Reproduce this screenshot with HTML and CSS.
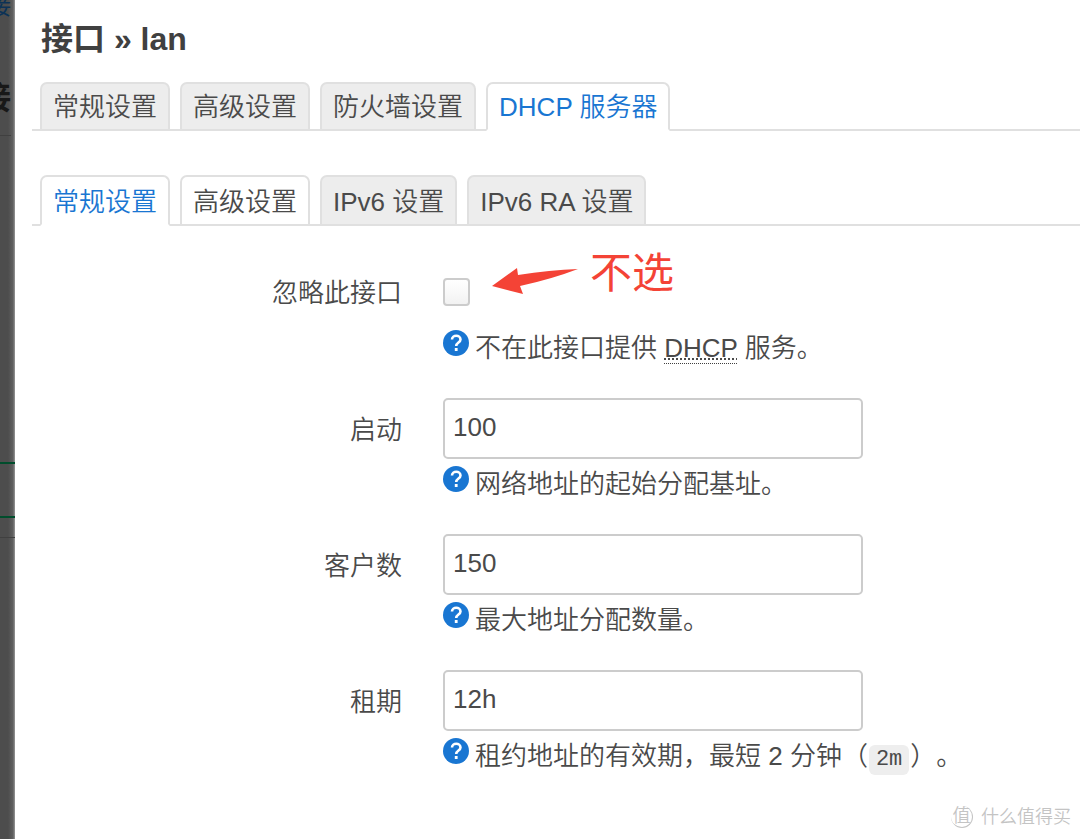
FILE: index.html
```
<!DOCTYPE html>
<html lang="zh-CN">
<head>
  <meta charset="UTF-8">
  <meta name="viewport" content="width=device-width, initial-scale=1.0">
  <title>接口 » lan</title>
  <link rel="stylesheet" href="styles.css">
</head>
<body>

  <!-- Page behind the dialog -->
  <div class="backdrop" aria-hidden="true">
    <div class="back-link">接</div>
    <div class="back-title">接</div>
    <div class="back-panel"></div>
    <div class="back-interface"></div>
    <div class="back-footer"></div>
  </div>

  <!-- Dialog -->
  <main class="modal">
    <h1>接口 » lan</h1>

    <ul class="tabs">
      <li><a href="#general">常规设置</a></li>
      <li><a href="#advanced">高级设置</a></li>
      <li><a href="#firewall">防火墙设置</a></li>
      <li class="active"><a href="#dhcp">DHCP 服务器</a></li>
    </ul>

    <ul class="tabs sub-tabs">
      <li class="active"><a href="#dhcp-general">常规设置</a></li>
      <li class="visited"><a href="#dhcp-advanced">高级设置</a></li>
      <li><a href="#dhcp-ipv6">IPv6 设置</a></li>
      <li><a href="#dhcp-ra">IPv6 RA 设置</a></li>
    </ul>

    <form class="settings">
      <div class="row row-check">
        <label for="ignore">忽略此接口</label>
        <div class="field">
          <div class="check-line">
            <input type="checkbox" id="ignore" name="ignore">
            <div class="note">
              <svg class="arrow" width="86" height="30" viewBox="0 0 86 30">
                <path d="M0 19 L25 1 L26 8 Q58 3 86 2 Q60 12 28 19 L31 27 Z" fill="#f44336"/>
              </svg>
              <span>不选</span>
            </div>
          </div>
          <p class="help">
            <svg class="help-icon" viewBox="0 0 26 26"><circle cx="13" cy="13" r="13" fill="#1976d2"/><path d="M9 9.500 C9 4.500 17.500 4.500 17.500 9.500 C17.500 12.500 13.200 12.500 13.200 16" fill="none" stroke="#fff" stroke-width="2.600"/><rect x="11.800" y="18" width="2.800" height="3" fill="#fff"/></svg>
            <span>不在此接口提供 <abbr title="Dynamic Host Configuration Protocol">DHCP</abbr> 服务。</span>
          </p>
        </div>
      </div>

      <div class="row">
        <label for="start">启动</label>
        <div class="field">
          <input type="text" id="start" name="start" value="100">
          <p class="help">
            <svg class="help-icon" viewBox="0 0 26 26"><circle cx="13" cy="13" r="13" fill="#1976d2"/><path d="M9 9.500 C9 4.500 17.500 4.500 17.500 9.500 C17.500 12.500 13.200 12.500 13.200 16" fill="none" stroke="#fff" stroke-width="2.600"/><rect x="11.800" y="18" width="2.800" height="3" fill="#fff"/></svg>
            <span>网络地址的起始分配基址。</span>
          </p>
        </div>
      </div>

      <div class="row">
        <label for="limit">客户数</label>
        <div class="field">
          <input type="text" id="limit" name="limit" value="150">
          <p class="help">
            <svg class="help-icon" viewBox="0 0 26 26"><circle cx="13" cy="13" r="13" fill="#1976d2"/><path d="M9 9.500 C9 4.500 17.500 4.500 17.500 9.500 C17.500 12.500 13.200 12.500 13.200 16" fill="none" stroke="#fff" stroke-width="2.600"/><rect x="11.800" y="18" width="2.800" height="3" fill="#fff"/></svg>
            <span>最大地址分配数量。</span>
          </p>
        </div>
      </div>

      <div class="row">
        <label for="leasetime">租期</label>
        <div class="field">
          <input type="text" id="leasetime" name="leasetime" value="12h">
          <p class="help">
            <svg class="help-icon" viewBox="0 0 26 26"><circle cx="13" cy="13" r="13" fill="#1976d2"/><path d="M9 9.500 C9 4.500 17.500 4.500 17.500 9.500 C17.500 12.500 13.200 12.500 13.200 16" fill="none" stroke="#fff" stroke-width="2.600"/><rect x="11.800" y="18" width="2.800" height="3" fill="#fff"/></svg>
            <span>租约地址的有效期，最短 2 分钟（<code>2m</code>）。</span>
          </p>
        </div>
      </div>
    </form>
  </main>

  <div class="watermark">
    <span class="watermark-logo">值</span>
    <span>什么值得买</span>
  </div>

</body>
</html>
```

FILE: styles.css
```
* {
  box-sizing: border-box;
}

body {
  margin: 0;
  min-height: 100vh;
  display: flex;
  position: relative;
  font-family: "Liberation Sans", "Noto Sans CJK SC", sans-serif;
  font-size: 26px;
  font-weight: 350;
  line-height: 36px;
  text-spacing-trim: space-all;
  color: #4a4a4a;
  background-color: #fff;
}

/* dimmed page on the left */
.backdrop {
  flex: 0 0 15px;
  position: relative;
  overflow: hidden;
  background: linear-gradient(to right, #4d4d4d 8px, #606060 13px, #999 15px);
}

.back-link, .back-title {
  display: flex;
  justify-content: flex-end;
  width: 11px;
}

.back-link {
  height: 82px;
  line-height: 12px;
  font-size: 24px;
  font-weight: 400;
  color: #0c3256;
}

.back-title {
  height: 54px;
  line-height: 32px;
  font-size: 32px;
  font-weight: bold;
  color: #181818;
  border-bottom: 1px solid #404040;
}

.back-panel {
  height: 326px;
}

.back-interface {
  height: 56px;
  border-top: 2px solid #004d2c;
  border-bottom: 2px solid #004d2c;
}

.back-footer {
  height: 20px;
  border-bottom: 1px solid #404040;
}

/* dialog */
.modal {
  flex: 1;
  min-width: 0;
  padding: 18px 0 0 17px;
}

h1 {
  margin: 0 0 22px 9px;
  font-size: 32px;
  line-height: 42px;
  font-weight: bold;
  color: #404040;
}

.tabs {
  display: flex;
  gap: 10px;
  margin: 0 0 44px;
  padding: 0 8px;
  list-style: none;
  border-bottom: 2px solid #e0e0e0;
}

.tabs li {
  margin-bottom: -2px;
  border: 2px solid #e0e0e0;
  border-radius: 7px 7px 0 0;
  background-color: #ededed;
}

.tabs a {
  display: block;
  padding: 1px 11px 0;
  line-height: 44px;
  color: inherit;
  text-decoration: none;
}

.sub-tabs a {
  padding-top: 3px;
}

.tabs .active {
  background-color: #fff;
  border-bottom-color: #fff;
}

.tabs .active a {
  color: #1976d2;
}

.tabs .visited {
  background-color: #fff;
}

/* form rows */
.row {
  display: flex;
  gap: 41px;
  margin-bottom: 32px;
}

.row label {
  flex: 0 0 370px;
  text-align: right;
  line-height: 64px;
}

.row .field {
  flex: 1;
}

.row-check label {
  line-height: 30px;
}

.settings {
  padding-top: 8px;
}

input[type="text"] {
  display: block;
  width: 100%;
  max-width: 420px;
  height: 61px;
  padding: 0 8px 2px;
  border: 2px solid #ccc;
  border-radius: 5px;
  font: inherit;
  color: inherit;
  background-color: #fff;
}

input[type="checkbox"] {
  appearance: none;
  display: block;
  width: 27px;
  height: 28px;
  margin: 0;
  border: 2px solid #ccc;
  border-radius: 4px;
  background: linear-gradient(#fff, #f2f2f2);
}

.check-line {
  position: relative;
  margin-bottom: 24px;
}

.note {
  position: absolute;
  left: 49px;
  top: -34px;
  display: flex;
  align-items: center;
  gap: 12px;
  white-space: nowrap;
  font-size: 42px;
  line-height: 60px;
  font-weight: 400;
  color: #f44336;
}

.arrow {
  margin-top: 16px;
}

.help {
  display: flex;
  gap: 6px;
  margin: 7px 0 0;
}

.help-icon {
  flex: 0 0 26px;
  height: 26px;
}

abbr {
  text-decoration: underline dotted 2px;
  text-underline-offset: 1px;
  text-decoration-skip-ink: none;
  border-bottom: 1px dotted #404040;
}

code {
  display: inline-block;
  margin: 0 1px;
  padding: 0 7px;
  border-radius: 6px;
  background-color: #eee;
  font-family: "Liberation Mono", monospace;
  font-size: 22px;
  line-height: 30px;
}

.watermark {
  position: absolute;
  right: 9px;
  bottom: 10px;
  display: flex;
  align-items: center;
  gap: 8px;
  font-size: 18px;
  line-height: 24px;
  color: #c4c4c4;
}

.watermark-logo {
  width: 22px;
  height: 22px;
  border-right: 1px solid #c4c4c4;
  border-bottom: 1px solid #c4c4c4;
  border-radius: 50%;
  line-height: 20px;
  text-align: center;
}
```
